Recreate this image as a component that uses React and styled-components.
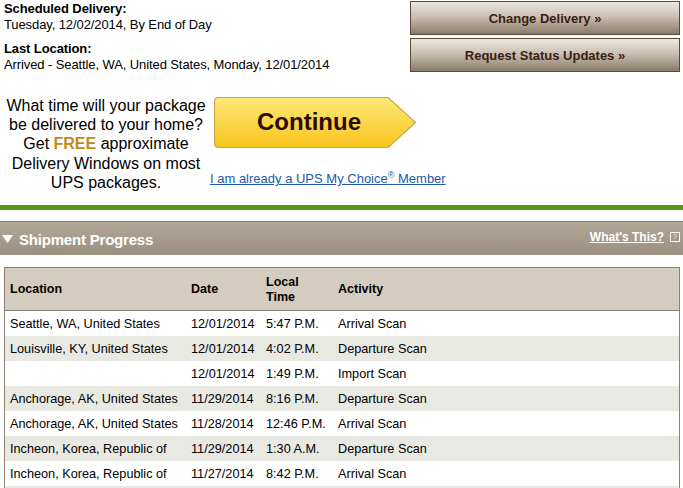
import React from "react";
import styled, { createGlobalStyle } from "styled-components";

const GlobalStyle = createGlobalStyle`
    body {
        margin: 0;
        font-family: "Liberation Sans", Arial, sans-serif;
        background: #ffffff;
        color: #000000;
    }
`;

const Page = styled.div`
    width: 683px;
    height: 488px;
    overflow: hidden;
`;

const TopRow = styled.div`
    display: flex;
    justify-content: space-between;
    padding: 1px 3px 0 4px;
`;

const InfoBlock = styled.div`
    font-size: 13px;
    line-height: 16px;
    letter-spacing: -0.1px;
`;

const InfoLabel = styled.div`
    font-weight: bold;
    margin-top: ${(p) => (p.$gap ? "8px" : "0")};
`;

const ButtonStack = styled.div`
    display: flex;
    flex-direction: column;
    gap: 3px;
    width: 270px;
`;

const BrownButton = styled.button`
    height: 34px;
    border: 1px solid #5b4a38;
    background: linear-gradient(#ece7df 0%, #c9c0b3 45%, #8a7b67 100%);
    color: #3b1e12;
    font-family: "Liberation Sans", Arial, sans-serif;
    font-weight: bold;
    font-size: 13px;
    cursor: pointer;
    padding: 0;
`;

const Promo = styled.div`
    display: flex;
    margin-top: 23px;
    padding-left: 6px;
    gap: 4px;
`;

const PromoText = styled.div`
    width: 200px;
    text-align: center;
    font-size: 16px;
    line-height: 19.2px;
`;

const Free = styled.span`
    color: #c08a14;
    font-weight: bold;
`;

const PromoRight = styled.div`
    display: flex;
    flex-direction: column;
    align-items: flex-start;
`;

const ContinueButton = styled.div`
    position: relative;
    width: 203px;
    height: 51px;
    margin-left: 4px;
    margin-top: 1px;
    display: flex;
    align-items: center;
    cursor: pointer;
`;

const ContinueShape = styled.svg`
    position: absolute;
    left: 0;
    top: 0;
`;

const ContinueLabel = styled.span`
    position: relative;
    margin-left: 43px;
    margin-top: -2px;
    font-size: 24px;
    font-weight: bold;
    color: #2b0a02;
`;

const MemberLink = styled.a`
    margin-top: 23px;
    font-size: 13px;
    color: #1d5aa8;
    text-decoration: underline;
    cursor: pointer;
    sup {
        font-size: 9px;
        line-height: 0;
    }
`;

const GreenRule = styled.div`
    height: 5px;
    background: #5c9418;
    margin-top: 13px;
`;

const SectionBar = styled.div`
    display: flex;
    align-items: center;
    justify-content: space-between;
    height: 33px;
    margin-top: 11px;
    border-top: 1px solid #8a8070;
    background: linear-gradient(#b1a898, #9b9080);
    padding: 0 3px 0 2px;
`;

const SectionTitle = styled.div`
    display: flex;
    align-items: center;
    gap: 6px;
    color: #ffffff;
    font-weight: bold;
    font-size: 15px;
    letter-spacing: -0.2px;
    margin-top: 1px;
`;

const HelpLink = styled.div`
    display: flex;
    align-items: center;
    gap: 6px;
    margin-top: -4px;
    a {
        color: #ffffff;
        font-weight: bold;
        font-size: 12px;
        text-decoration: underline;
    }
`;

const HelpBox = styled.span`
    display: inline-flex;
    align-items: center;
    justify-content: center;
    width: 8px;
    height: 8px;
    border: 1px solid #ffffff;
    background: #a39987;
    color: #ffffff;
    font-size: 7px;
    line-height: 1;
`;

const Table = styled.table`
    margin: 12px 0 0 4px;
    width: 676px;
    border-collapse: collapse;
    border: 1px solid #8b8273;
    font-size: 12.7px;
`;

const HeadCell = styled.th`
    background: #d4ccbf;
    text-align: left;
    font-weight: bold;
    font-size: 12.5px;
    height: 41px;
    padding: 1px 0 0 5px;
    border-bottom: 1px solid #8b8273;
    width: ${(p) => p.$w || "auto"};
    line-height: 15px;
`;

const Row = styled.tr`
    background: ${(p) => (p.$alt ? "#e9e9e4" : "#ffffff")};
`;

const Cell = styled.td`
    height: 25px;
    padding: 0 0 0 5px;
    white-space: nowrap;
`;

const rows = [
    ["Seattle, WA, United States", "12/01/2014", "5:47 P.M.", "Arrival Scan"],
    ["Louisville, KY, United States", "12/01/2014", "4:02 P.M.", "Departure Scan"],
    ["", "12/01/2014", "1:49 P.M.", "Import Scan"],
    ["Anchorage, AK, United States", "11/29/2014", "8:16 P.M.", "Departure Scan"],
    ["Anchorage, AK, United States", "11/28/2014", "12:46 P.M.", "Arrival Scan"],
    ["Incheon, Korea, Republic of", "11/29/2014", "1:30 A.M.", "Departure Scan"],
    ["Incheon, Korea, Republic of", "11/27/2014", "8:42 P.M.", "Arrival Scan"],
    ["", "", "", ""],
];

function App() {
    return (
        <Page>
            <GlobalStyle />
            <TopRow>
                <InfoBlock>
                    <InfoLabel>Scheduled Delivery:</InfoLabel>
                    <div>Tuesday, 12/02/2014, By End of Day</div>
                    <InfoLabel $gap>Last Location:</InfoLabel>
                    <div>Arrived - Seattle, WA, United States, Monday, 12/01/2014</div>
                </InfoBlock>
                <ButtonStack>
                    <BrownButton>Change Delivery »</BrownButton>
                    <BrownButton>Request Status Updates »</BrownButton>
                </ButtonStack>
            </TopRow>

            <Promo>
                <PromoText>
                    What time will your package be delivered to your home? Get{" "}
                    <Free>FREE</Free> approximate Delivery Windows on most UPS
                    packages.
                </PromoText>
                <PromoRight>
                    <ContinueButton>
                        <ContinueShape width="203" height="51" viewBox="0 0 203 51">
                            <defs>
                                <linearGradient id="yel" x1="0" y1="0" x2="0" y2="1">
                                    <stop offset="0" stopColor="#fee97a" />
                                    <stop offset="1" stopColor="#f9c51c" />
                                </linearGradient>
                            </defs>
                            <path
                                d="M5 0.5 H174 L201.5 25.5 L174 50.5 H5 Q0.5 50.5 0.5 46 V5 Q0.5 0.5 5 0.5 Z"
                                fill="url(#yel)"
                                stroke="#c9a54a"
                                strokeWidth="1.2"
                            />
                        </ContinueShape>
                        <ContinueLabel>Continue</ContinueLabel>
                    </ContinueButton>
                    <MemberLink>
                        I am already a UPS My Choice<sup>®</sup> Member
                    </MemberLink>
                </PromoRight>
            </Promo>

            <GreenRule />

            <SectionBar>
                <SectionTitle>
                    <svg width="11" height="8" viewBox="0 0 11 8">
                        <path d="M0 0 H11 L5.5 8 Z" fill="#ffffff" />
                    </svg>
                    Shipment Progress
                </SectionTitle>
                <HelpLink>
                    <a>What's This?</a>
                    <HelpBox>?</HelpBox>
                </HelpLink>
            </SectionBar>

            <Table>
                <thead>
                    <tr>
                        <HeadCell $w="176px">Location</HeadCell>
                        <HeadCell $w="70px">Date</HeadCell>
                        <HeadCell $w="67px">
                            Local
                            <br />
                            Time
                        </HeadCell>
                        <HeadCell>Activity</HeadCell>
                    </tr>
                </thead>
                <tbody>
                    {rows.map((r, i) => (
                        <Row key={i} $alt={i % 2 === 1}>
                            {r.map((c, j) => (
                                <Cell key={j}>{c}</Cell>
                            ))}
                        </Row>
                    ))}
                </tbody>
            </Table>
        </Page>
    );
}

export default App;
